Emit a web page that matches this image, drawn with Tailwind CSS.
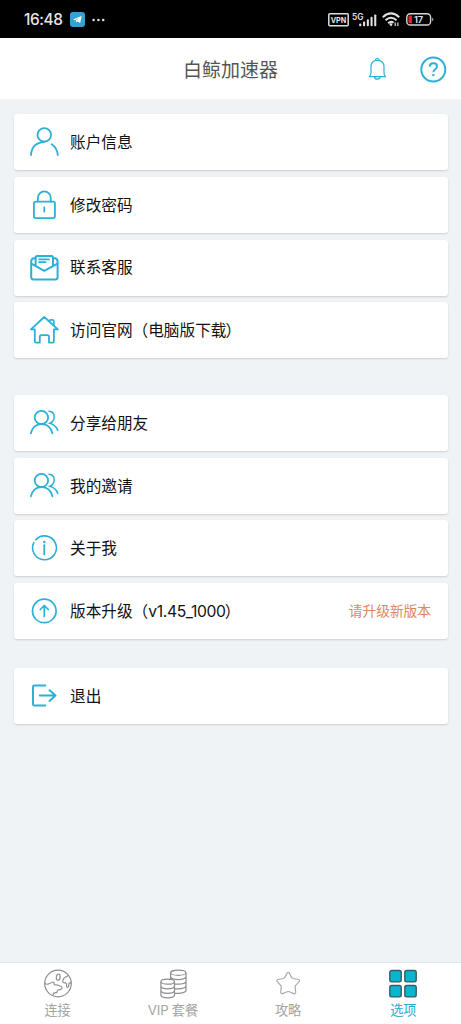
<!DOCTYPE html>
<html lang="zh-CN">
<head>
<meta charset="utf-8">
<meta name="viewport" content="width=device-width, initial-scale=1">
<title>白鲸加速器</title>
<script src="https://cdn.jsdelivr.net/npm/@tailwindcss/browser@4"></script>
</head>
<body class="bg-[#f0f3f4]">
<div class="flex h-[1024px] w-[461px] flex-col overflow-hidden bg-[#f0f3f5] font-['Noto_Sans','Noto_Sans_CJK_SC',sans-serif]">

  <!-- status bar -->
  <div class="flex h-[38px] shrink-0 items-center justify-between bg-black pl-[24px] pr-[27px] pt-px text-[#e6e6e6]">
    <div class="flex items-center">
      <span class="w-[39px] whitespace-nowrap font-['Inter'] text-[15.4px] font-medium leading-none tracking-[-0.4px]">16:48</span>
      <svg class="ml-[7px]" width="15" height="15" viewBox="0 0 15 15"><rect width="15" height="15" rx="3" fill="#37a0d2"/><path d="M3 7.6 11.6 4 10.2 11 7.2 9.2 6 10.6 5.8 8.5 9.5 5.5 4.9 8.2Z" fill="#fff"/></svg>
      <svg class="ml-[7px]" width="13" height="4" viewBox="0 0 13 4" fill="#e0e0e0"><circle cx="1.6" cy="2" r="1.3"/><circle cx="6.4" cy="2" r="1.3"/><circle cx="11.2" cy="2" r="1.3"/></svg>
    </div>
    <div class="flex items-center">
      <svg width="21" height="14" viewBox="0 0 21 14"><rect x=".8" y=".8" width="19.4" height="12" rx="1" fill="none" stroke="#dddddd" stroke-width="1.5"/><text x="10.5" y="9.6" text-anchor="middle" font-family="Inter" font-size="7.2" font-weight="700" fill="#e6e6e6">VPN</text></svg>
      <svg class="ml-[3px]" width="25" height="16" viewBox="0 0 25 16" fill="#e0e0e0"><text x="0" y="7.8" font-family="Inter" font-size="8.4" font-weight="600">5G</text><rect x="7.2" y="11.4" width="2.1" height="2.8" rx=".8"/><rect x="11" y="9.5" width="2.1" height="4.7" rx=".8"/><rect x="14.8" y="7.2" width="2.1" height="7" rx=".8"/><rect x="18.5" y="4.7" width="2.1" height="9.5" rx=".8"/><rect x="22.2" y="2.4" width="2.1" height="11.8" rx=".8"/></svg>
      <svg class="ml-[5px]" width="18" height="15" viewBox="0 0 18 15" fill="none" stroke="#e0e0e0" stroke-width="2"><path d="M.8 5.2Q9-2.4 17.2 5.2"/><path d="M3.5 8.3Q9 3.3 14.5 8.3"/><path d="M6.1 11.2Q9 8.8 11.6 10.8"/><path d="M7.2 12 9 14.4 10.6 12.4 9 11Z" fill="#e0e0e0" stroke="none"/><path d="M13.2 10.5v3.5M15.9 10.5v3.5" stroke-width="1.2"/></svg>
      <svg class="ml-[6px]" width="28" height="13" viewBox="0 0 28 13"><rect x=".8" y=".8" width="23.8" height="11.2" rx="3.6" fill="none" stroke="#d8d8d8" stroke-width="1.4"/><path d="M3.7 2.5H6v7.8H3.7Q2.4 10.3 2.4 9V3.8Q2.4 2.5 3.7 2.5Z" fill="#d8262c"/><path d="M26.3 4.5Q28.4 6.4 26.3 8.3Z" fill="#d8d8d8"/><text x="12.6" y="9.7" text-anchor="middle" font-family="Inter" font-size="9.3" font-weight="600" fill="#e6e6e6">17</text></svg>
    </div>
  </div>

  <!-- title bar -->
  <header class="grid h-[61px] shrink-0 grid-cols-[1fr_auto_1fr] items-center bg-white">
    <span></span>
    <h1 class="pt-[3px] text-[19px] leading-none text-[#555555]">白鲸加速器</h1>
    <div class="flex items-center justify-end gap-[33px] pr-[14.5px] pt-px">
      <svg width="19" height="24" viewBox="0 0 19 24" fill="none" stroke="#2bb0d6" stroke-width="1.2" stroke-linejoin="round" stroke-linecap="round"><path d="M1.2 19.7H17.6Q16 18.3 16 15.8V9.8Q16 3.4 9.4 3.4 3 3.4 3 9.8V15.8Q3 18.3 1.2 19.7Z"/><path d="M7.5 3.4Q7.6 1.5 9.4 1.5T11.3 3.4M6.6 20Q7.1 22.2 9.4 22.2T12.2 20"/></svg>
      <svg width="27" height="27" viewBox="0 0 27 27" fill="none" stroke="#2bb0d6" stroke-width="2"><circle cx="13.3" cy="13.5" r="12"/><path d="M9.7 10.8Q9.8 7.3 13.4 7.3 17 7.3 17 10.4 17 12 15.2 13.3 13.4 14.5 13.4 16.3" stroke-width="1.9"/><path d="M13.4 18v2.2" stroke-width="2.1"/></svg>
    </div>
  </header>

  <!-- option list -->
  <main class="flex flex-1 flex-col px-[13.5px] pt-[15.3px] text-[15.65px] leading-none text-[#111111]">
    <div class="flex flex-col gap-[6.7px]">
      <div class="flex h-[56px] items-center rounded-[3px] bg-white pl-[15.5px] shadow-[0_1px_2px_rgba(0,0,0,0.15)]">
        <svg width="30" height="30" viewBox="0 0 30 30" fill="none" stroke="#2bb0d6" stroke-width="1.8" stroke-linecap="round"><circle cx="15.3" cy="7.9" r="6.8"/><path d="M2 28Q2.7 16 15.3 14.9M22.7 17.2Q28.3 21 28.8 28"/></svg>
        <span class="ml-[11px] pt-[2px]">账户信息</span>
      </div>
      <div class="flex h-[56px] items-center rounded-[3px] bg-white pl-[15.5px] shadow-[0_1px_2px_rgba(0,0,0,0.15)]">
        <svg width="30" height="30" viewBox="0 0 30 30" fill="none" stroke="#2bb0d6" stroke-width="1.8" stroke-linecap="round"><rect x="4.9" y="11.7" width="21" height="16.4" rx="1.8"/><path d="M8.9 11.5V7.8a6.4 6.4 0 0 1 12.8 0V11.5M15.3 17.5v4"/></svg>
        <span class="ml-[11px] pt-[2px]">修改密码</span>
      </div>
      <div class="flex h-[56px] items-center rounded-[3px] bg-white pl-[15.5px] shadow-[0_1px_2px_rgba(0,0,0,0.15)]">
        <svg width="30" height="30" viewBox="0 0 30 30" fill="none" stroke="#2bb0d6" stroke-width="2" stroke-linecap="round" stroke-linejoin="round"><path d="M6.6 5.2H4.8Q2.2 5.8 2.2 8.5V24.3Q2.2 26.4 4.3 26.4H26.5Q28.6 26.4 28.6 24.3V8.5Q28.6 5.8 26 5.2H24"/><path d="M2.8 10.8 15.3 17.8 28 10.8M6.6 12.2V4.6Q6.6 3 8.2 3H22.4Q24 3 24 4.6V12.2"/><path d="M10.2 6.4H20M10.2 9.2H16.5" stroke-width="1.8"/></svg>
        <span class="ml-[11px] pt-[1px]">联系客服</span>
      </div>
      <div class="flex h-[56px] items-center rounded-[3px] bg-white pl-[15.5px] shadow-[0_1px_2px_rgba(0,0,0,0.15)]">
        <svg width="30" height="30" viewBox="0 0 30 30" fill="none" stroke="#2bb0d6" stroke-width="1.8" stroke-linecap="round" stroke-linejoin="round"><path d="M15.3 2 1.9 14.4H5.8V26Q5.8 27.6 7.4 27.6H10.8V21.8Q10.8 20.2 12.4 20.2H18.4Q20 20.2 20 21.8V27.6H23.3Q24.9 27.6 24.9 26V14.4H28.8Z"/><path d="M20.6 6V5.6Q20.8 4.8 21.8 4.8H23.4Q24.8 5 24.8 6.4V10"/></svg>
        <span class="ml-[11px] whitespace-nowrap pt-[1px]">访问官网（电脑版下载<span class="-ml-px">）</span></span>
      </div>
    </div>

    <div class="mt-[36.5px] flex flex-col gap-[6.7px]">
      <div class="flex h-[56px] items-center rounded-[3px] bg-white pl-[15.5px] shadow-[0_1px_2px_rgba(0,0,0,0.15)]">
        <svg width="30" height="30" viewBox="0 0 30 30" fill="none" stroke="#2bb0d6" stroke-width="1.8" stroke-linecap="round"><circle cx="12.4" cy="9.5" r="6.7"/><path d="M1.9 25.3Q4.2 16.2 12.6 16.2 21 16.2 23.4 25.3"/><path d="M20 3.3Q25.2 3.8 25.2 8.8 25.2 13.4 20.9 15.3 27 17.2 28.8 22.4" stroke-width="1.5"/></svg>
        <span class="ml-[11px] pt-[2px]">分享给朋友</span>
      </div>
      <div class="flex h-[56px] items-center rounded-[3px] bg-white pl-[15.5px] shadow-[0_1px_2px_rgba(0,0,0,0.15)]">
        <svg width="30" height="30" viewBox="0 0 30 30" fill="none" stroke="#2bb0d6" stroke-width="1.8" stroke-linecap="round"><circle cx="12.4" cy="9.5" r="6.7"/><path d="M1.9 25.3Q4.2 16.2 12.6 16.2 21 16.2 23.4 25.3"/><path d="M20 3.3Q25.2 3.8 25.2 8.8 25.2 13.4 20.9 15.3 27 17.2 28.8 22.4" stroke-width="1.5"/></svg>
        <span class="ml-[11px] pt-[2px]">我的邀请</span>
      </div>
      <div class="flex h-[56px] items-center rounded-[3px] bg-white pl-[15.5px] shadow-[0_1px_2px_rgba(0,0,0,0.15)]">
        <svg width="30" height="30" viewBox="0 0 30 30" fill="none" stroke="#2bb0d6" stroke-width="1.6" stroke-linecap="round"><path d="M6.9 6.6A11.9 11.9 0 1 1 4.8 9.6"/><path d="M15.3 12.2v9.4" stroke-width="1.8"/><circle cx="15.3" cy="9.1" r=".5"/></svg>
        <span class="ml-[11px] pt-[2px]">关于我</span>
      </div>
      <div class="flex h-[56px] items-center rounded-[3px] bg-white pl-[15.5px] pr-[16.5px] shadow-[0_1px_2px_rgba(0,0,0,0.15)]">
        <svg width="30" height="30" viewBox="0 0 30 30" fill="none" stroke="#2bb0d6" stroke-width="1.7" stroke-linecap="round" stroke-linejoin="round"><circle cx="15.3" cy="14.9" r="11.8"/><path d="M15.3 20.4V9.6M11.3 13.5 15.3 9.5 19.3 13.5"/></svg>
        <span class="ml-[11px] whitespace-nowrap pt-[2px]">版本升级（<span class="font-['Inter'] text-[15.7px] tracking-[-0.35px]">v1.45_1000</span><span class="-ml-px">）</span></span>
        <span class="ml-auto text-[13.7px] text-[#e08660]">请升级新版本</span>
      </div>
    </div>

    <div class="mt-[29.5px] flex h-[56px] items-center rounded-[3px] bg-white pl-[15.5px] shadow-[0_1px_2px_rgba(0,0,0,0.15)]">
      <svg width="30" height="30" viewBox="0 0 30 30" fill="none" stroke="#2bb0d6" stroke-width="2" stroke-linecap="round" stroke-linejoin="round"><path d="M16.3 4.6H5.3Q4 4.6 4 5.9V23.3Q4 24.6 5.3 24.6H16.3M10.8 14.6H26.5M20.5 9.3 26.5 14.6 20.5 19.9"/></svg>
      <span class="ml-[11px] pt-[1px]">退出</span>
    </div>
  </main>

  <!-- tab bar -->
  <nav class="grid h-[62px] shrink-0 grid-cols-4 border-t border-[#e0e3e4] bg-white text-[13.2px] leading-none text-[#a3a3a3]">
    <div class="flex flex-col items-center pt-[6px]">
      <svg width="30" height="30" viewBox="0 0 30 30" fill="none" stroke="#8e8e8e" stroke-width="1.2" stroke-linejoin="round"><circle cx="15" cy="14.5" r="13.3"/><path d="M1.9 14.6Q4 15.8 6 14.8T9.5 13.3Q11 12.8 11.2 15 11.5 16.5 14 15.8L17 17Q19.5 17.8 18.8 19.4 18 21 15.4 20.8 13.8 21.5 14.2 23 13.3 24 11 23.8 10.6 25.4 9.6 26.4"/><path d="M14.4 5.3Q16.8 4.3 17 6.8 17.6 9.8 15.8 11 13.6 11.7 13.3 9.4 13 6.6 14.4 5.3Z"/><path d="M24.6 6Q25 7.8 22.4 8 20 9.4 19.7 12 20 14.2 22.5 13.8 24 14.6 23.6 17.4 24.4 19.3 25.6 17.5L26 14.2Q27.8 14.5 28.2 13"/></svg>
      <span class="mt-[5px]">连接</span>
    </div>
    <div class="flex flex-col items-center pt-[6px]">
      <svg width="30" height="30" viewBox="0 0 30 30" fill="none" stroke="#8e8e8e" stroke-width="1.2"><ellipse cx="20.3" cy="3.7" rx="7.7" ry="2.6"/><path d="M12.6 3.7V10M28 3.7V21.7Q27 24 20.3 24.3H16.8M12.6 8.2Q14.5 10.7 20.3 10.7T28 8.2M16.8 15.2H20.3Q27 15 28 12.7M16.8 19.8H20.3Q27 19.6 28 17.2"/><ellipse cx="9.7" cy="12.7" rx="6.8" ry="2.5"/><path d="M2.9 12.7V26.3Q3.8 28.9 9.7 28.9T16.5 26.3V12.7M2.9 17.2Q3.8 19.8 9.7 19.8T16.5 17.2M2.9 21.7Q3.8 24.3 9.7 24.3T16.5 21.7"/></svg>
      <span class="mt-[5px] whitespace-nowrap"><span class="font-['Inter'] text-[13.2px]">VIP</span><span class="ml-[3px]">套餐</span></span>
    </div>
    <div class="flex flex-col items-center pt-[6px]">
      <svg width="30" height="30" viewBox="0 0 30 30" fill="none" stroke="#aaaaaa" stroke-width="1.2" stroke-linejoin="round"><path d="M14 4.2Q15.2 2.6 16.4 4.2L18.7 8.6Q19 9.3 19.8 9.5L25.4 10.5Q27.3 11 26.1 12.6L22.5 16.7Q22 17.3 22.1 18.1L22.7 23.3Q22.6 25.3 20.8 24.6L16.2 22.7Q15.2 22.3 14.2 22.7L9.6 24.6Q7.8 25.3 7.7 23.3L8.3 18.1Q8.4 17.3 7.9 16.7L4.3 12.6Q3.1 11 5 10.5L10.6 9.5Q11.4 9.3 11.7 8.6Z"/></svg>
      <span class="mt-[5px]">攻略</span>
    </div>
    <div class="flex flex-col items-center pt-[6px] text-[#2aa9cf]">
      <svg width="30" height="30" viewBox="0 0 30 30" fill="#08b6d0" stroke="#365e68" stroke-width="1.4"><rect x="1.8" y="1.5" width="11.4" height="11.4" rx="1.8"/><rect x="16.8" y="1.5" width="11.4" height="11.4" rx="1.8"/><rect x="1.8" y="16.5" width="11.4" height="11.4" rx="1.8"/><rect x="16.8" y="16.5" width="11.4" height="11.4" rx="1.8"/></svg>
      <span class="mt-[5px]">选项</span>
    </div>
  </nav>
</div>
</body>
</html>
